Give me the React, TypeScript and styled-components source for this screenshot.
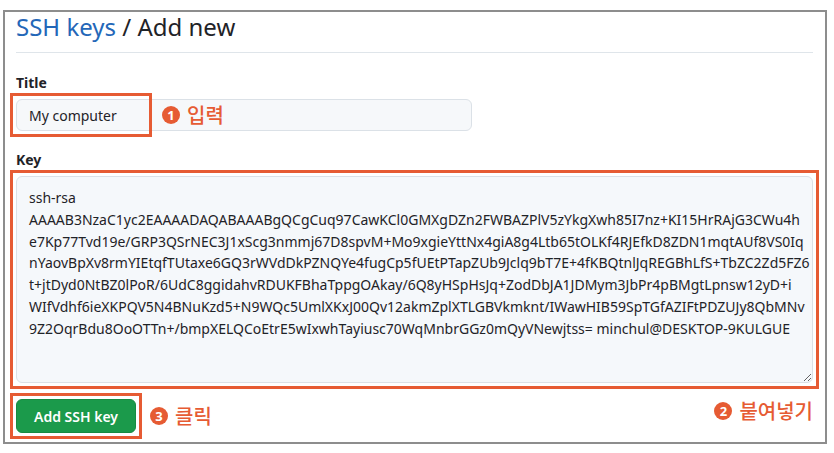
import React from "react";
import styled, { createGlobalStyle } from "styled-components";

const Global = createGlobalStyle`
  html, body { margin: 0; padding: 0; background: #ffffff; }
  body { font-family: "Noto Sans", "Open Sans", sans-serif; color: #1f2328; }
`;

const ORANGE = "#e65b33";

const Frame = styled.div`
  box-sizing: border-box;
  width: 824px;
  height: 434px;
  margin: 10px 0 0 3px;
  border: 2px solid #8d8d8d;
  padding: 0 12px 0 11px;
  display: flex;
  flex-direction: column;
`;

const Header = styled.h1`
  margin: 0;
  padding: 0 0 10px 0;
  font-size: 24px;
  line-height: 30px;
  font-weight: 400;
  color: #1f2328;
  border-bottom: 1px solid #dfe5ea;
`;

const Crumb = styled.a`
  color: #2467b8;
  text-decoration: none;
`;

const Label = styled.label<{ $top: number }>`
  display: block;
  font-size: 14px;
  line-height: 20px;
  font-weight: 700;
  color: #1f2328;
  margin-top: ${(p) => p.$top}px;
  margin-bottom: 6px;
`;

const Annotated = styled.div`
  position: relative;
  align-self: flex-start;
`;

const RedBox = styled.span<{ $w?: number }>`
  position: absolute;
  left: -6px;
  top: -6px;
  bottom: -6px;
  ${(p) => (p.$w ? `width: ${p.$w}px;` : "right: -6px;")}
  border: 3px solid ${ORANGE};
  box-sizing: border-box;
  pointer-events: none;
`;

const TitleInput = styled.input`
  box-sizing: border-box;
  width: 456px;
  height: 32px;
  padding: 0 12px;
  font-family: "Noto Sans", sans-serif;
  font-size: 14px;
  color: #1f2328;
  background: #f6f8fa;
  border: 1px solid #dbe1e7;
  border-radius: 6px;
  outline: none;
`;

const KeyArea = styled.textarea`
  box-sizing: border-box;
  display: block;
  width: 797px;
  height: 207px;
  padding: 10px 12px;
  font-family: "Noto Sans", sans-serif;
  font-size: 14px;
  line-height: 21.8px;
  color: #1f2328;
  background: #f5f8fb;
  border: 1px solid #dbe1e7;
  border-radius: 6px;
  white-space: pre;
  overflow: hidden;
  resize: vertical;
  outline: none;
`;

const Note = styled.span`
  display: inline-flex;
  align-items: center;
  gap: 7px;
  color: ${ORANGE};
  font-family: "Noto Sans CJK KR", "Noto Sans", sans-serif;
  font-size: 20px;
  font-weight: 500;
  line-height: 24px;
  white-space: nowrap;
`;

const FloatingNote = styled(Note)`
  position: absolute;
  left: 146px;
  top: 50%;
  transform: translateY(-50%);
`;

const Num = styled.span`
  display: inline-flex;
  align-items: center;
  justify-content: center;
  width: 18px;
  height: 18px;
  border-radius: 50%;
  background: ${ORANGE};
  color: #ffffff;
  font-family: "Noto Sans", sans-serif;
  font-size: 13px;
  font-weight: 700;
  line-height: 1;
`;

const ActionRow = styled.div`
  display: flex;
  align-items: flex-start;
  margin-top: 16px;
`;

const SubmitButton = styled.button`
  box-sizing: border-box;
  width: 120px;
  height: 34px;
  padding: 0;
  background: #1b9a4b;
  color: #ffffff;
  border: 1px solid #178a42;
  border-radius: 6px;
  font-family: "Noto Sans", sans-serif;
  font-size: 14px;
  font-weight: 600;
  cursor: pointer;
`;

const ClickNote = styled(Note)`
  margin: 5px 0 0 14px;
`;

const PasteNote = styled(Note)`
  margin: 0 0 0 auto;
`;

const KEY = [
  "ssh-rsa",
  "AAAAB3NzaC1yc2EAAAADAQABAAABgQCgCuq97CawKCl0GMXgDZn2FWBAZPlV5zYkgXwh85I7nz+KI15HrRAjG3CWu4h",
  "e7Kp77Tvd19e/GRP3QSrNEC3J1xScg3nmmj67D8spvM+Mo9xgieYttNx4giA8g4Ltb65tOLKf4RJEfkD8ZDN1mqtAUf8VS0Iq",
  "nYaovBpXv8rmYIEtqfTUtaxe6GQ3rWVdDkPZNQYe4fugCp5fUEtPTapZUb9Jclq9bT7E+4fKBQtnlJqREGBhLfS+TbZC2Zd5FZ6",
  "t+jtDyd0NtBZ0lPoR/6UdC8ggidahvRDUKFBhaTppgOAkay/6Q8yHSpHsJq+ZodDbJA1JDMym3JbPr4pBMgtLpnsw12yD+i",
  "WIfVdhf6ieXKPQV5N4BNuKzd5+N9WQc5UmlXKxJ00Qv12akmZplXTLGBVkmknt/IWawHIB59SpTGfAZIFtPDZUJy8QbMNv",
  "9Z2OqrBdu8OoOTTn+/bmpXELQCoEtrE5wIxwhTayiusc70WqMnbrGGz0mQyVNewjtss= minchul@DESKTOP-9KULGUE",
].join("\n");

export default function App() {
  return (
    <>
      <Global />
      <Frame>
        <Header>
          <Crumb href="#">SSH keys</Crumb> / Add new
        </Header>

        <Label $top={20}>Title</Label>
        <Annotated>
          <TitleInput defaultValue="My computer" />
          <RedBox $w={142} />
          <FloatingNote>
            <Num>1</Num>입력
          </FloatingNote>
        </Annotated>

        <Label $top={19}>Key</Label>
        <Annotated>
          <KeyArea defaultValue={KEY} spellCheck={false} />
          <RedBox />
        </Annotated>

        <ActionRow>
          <Annotated>
            <SubmitButton type="button">Add SSH key</SubmitButton>
            <RedBox />
          </Annotated>
          <ClickNote>
            <Num>3</Num>클릭
          </ClickNote>
          <PasteNote>
            <Num>2</Num>붙여넣기
          </PasteNote>
        </ActionRow>
      </Frame>
    </>
  );
}
